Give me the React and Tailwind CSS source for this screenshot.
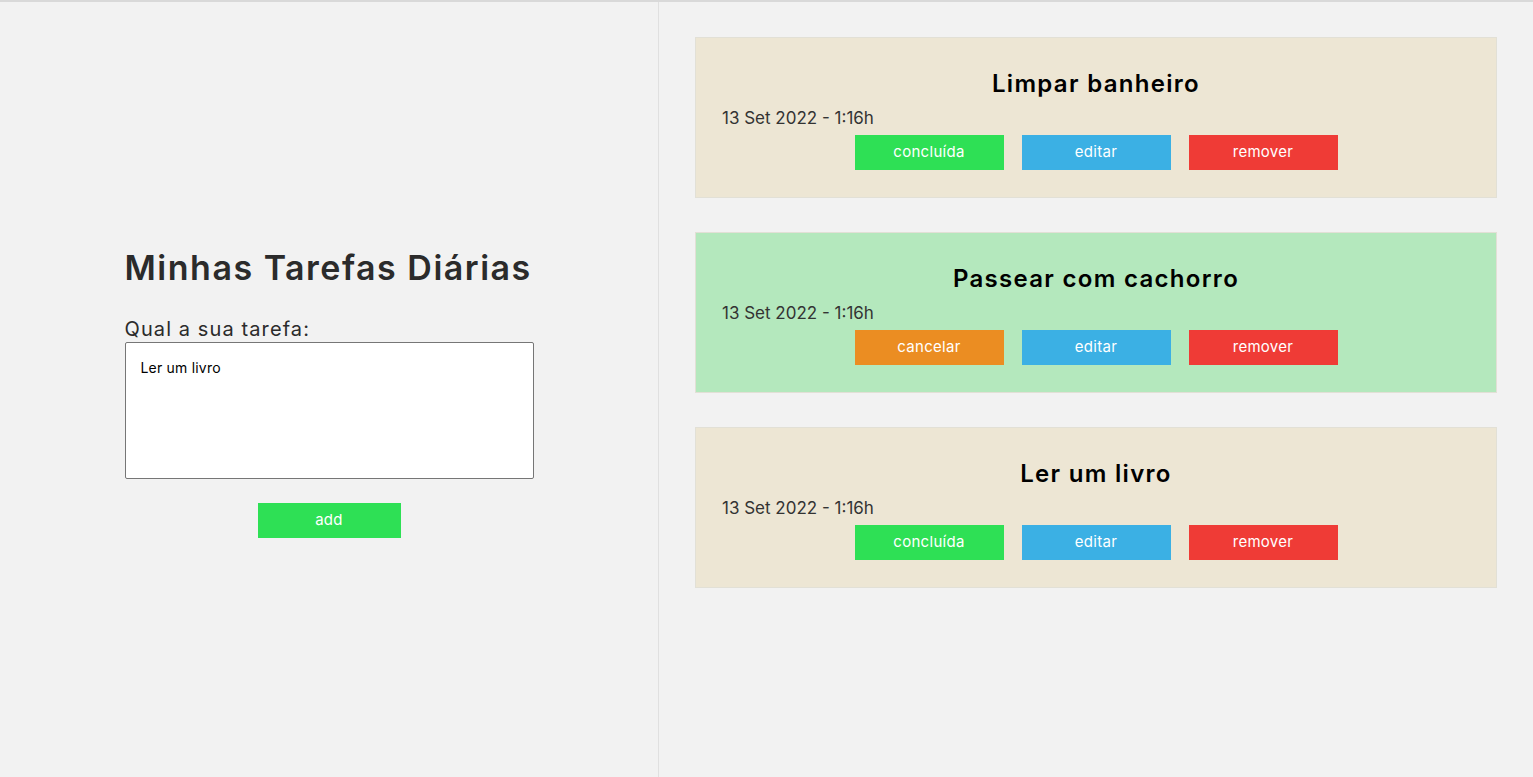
import React, { useState } from 'react';

const tarefasIniciais = [
  { id: 1, titulo: 'Limpar banheiro', data: '13 Set 2022 - 1:16h', concluida: false },
  { id: 2, titulo: 'Passear com cachorro', data: '13 Set 2022 - 1:16h', concluida: true },
  { id: 3, titulo: 'Ler um livro', data: '13 Set 2022 - 1:16h', concluida: false },
];

const Tarefa = ({ tarefa }) => (
  <div
    className={`border border-[#e2e0d6] px-[26px] pt-[28px] pb-[27px] ${
      tarefa.concluida ? 'bg-[#b4e8bd]' : 'bg-[#ede6d4]'
    }`}
  >
    <h2 className="text-center text-[24px] leading-[36px] font-semibold tracking-[1.3px] text-black">{tarefa.titulo}</h2>
    <div className="mt-[3px] text-[17px] leading-[26px] text-[#333]">{tarefa.data}</div>
    <div className="flex justify-center gap-[18px] mt-[4px]">
      {tarefa.concluida ? (
        <button className="w-[149px] h-[35px] bg-[#eb8d22] text-white text-[15px] tracking-[0.3px]">cancelar</button>
      ) : (
        <button className="w-[149px] h-[35px] bg-[#2ee055] text-white text-[15px] tracking-[0.3px]">concluída</button>
      )}
      <button className="w-[149px] h-[35px] bg-[#3bb0e4] text-white text-[15px] tracking-[0.3px]">editar</button>
      <button className="w-[149px] h-[35px] bg-[#ef3b36] text-white text-[15px] tracking-[0.3px]">remover</button>
    </div>
  </div>
);

const App = () => {
  const [texto, setTexto] = useState('Ler um livro');

  return (
    <div
      className="h-[777px] bg-[#f2f2f2] border-t-2 border-[#d9d9d9] flex text-[#2b2b2b]"
      style={{ fontFamily: 'Inter, "Noto Sans", sans-serif' }}
    >
      <section className="w-[659px] border-r border-[#e0e0e0] flex items-center justify-center pt-[6px]">
        <div className="w-[409px] flex flex-col">
          <h1 className="text-[34px] leading-[40px] font-semibold tracking-[1.5px] text-[#2b2b2b]">Minhas Tarefas Diárias</h1>
          <label className="mt-[28px] text-[20px] leading-[26px] tracking-[1.1px] text-[#2b2b2b]">Qual a sua tarefa:</label>
          <textarea
            value={texto}
            onChange={(e) => setTexto(e.target.value)}
            className="h-[137px] bg-white border border-[#767676] rounded-[2px] px-[15px] py-[16px] text-[14px] leading-[18px] tracking-[0.2px] text-black resize-none outline-none"
          />
          <button className="self-center mt-[24px] w-[143px] h-[35px] bg-[#2ee055] text-white text-[15px] tracking-[0.3px]">add</button>
        </div>
      </section>
      <section className="flex-1 px-[36px] pt-[35px] flex flex-col gap-[34px]">
        {tarefasIniciais.map((t) => (
          <Tarefa key={t.id} tarefa={t} />
        ))}
      </section>
    </div>
  );
};

export default App;
